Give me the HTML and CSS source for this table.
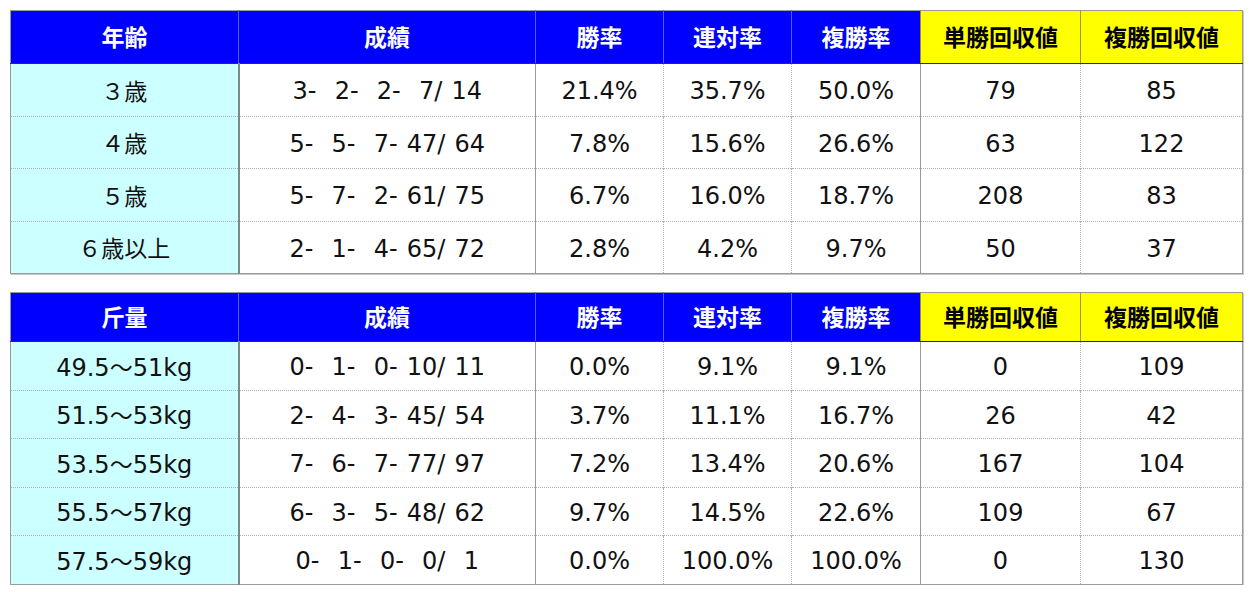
FILE: index.html
```html
<!DOCTYPE html>
<html lang="ja">
<head>
<meta charset="utf-8">
<link rel="stylesheet" href="styles.css">
</head>
<body>
<div class="page">
<table class="stats t1">
<colgroup><col class="c1"><col class="c2"><col class="c3"><col class="c4"><col class="c5"><col class="c6"><col class="c7"></colgroup>
<thead><tr><th>年齢</th><th>成績</th><th>勝率</th><th>連対率</th><th>複勝率</th><th class="y">単勝回収値</th><th class="y">複勝回収値</th></tr></thead>
<tbody>
<tr><td class="k"><span class="ja">３歳</span></td><td class="rec">3-  2-  2-  7/ 14</td><td>21.4%</td><td>35.7%</td><td>50.0%</td><td>79</td><td>85</td></tr>
<tr><td class="k"><span class="ja">４歳</span></td><td class="rec">5-  5-  7- 47/ 64</td><td>7.8%</td><td>15.6%</td><td>26.6%</td><td>63</td><td>122</td></tr>
<tr><td class="k"><span class="ja">５歳</span></td><td class="rec">5-  7-  2- 61/ 75</td><td>6.7%</td><td>16.0%</td><td>18.7%</td><td>208</td><td>83</td></tr>
<tr><td class="k"><span class="ja">６歳以上</span></td><td class="rec">2-  1-  4- 65/ 72</td><td>2.8%</td><td>4.2%</td><td>9.7%</td><td>50</td><td>37</td></tr>
</tbody>
</table>
<table class="stats t2">
<colgroup><col class="c1"><col class="c2"><col class="c3"><col class="c4"><col class="c5"><col class="c6"><col class="c7"></colgroup>
<thead><tr><th>斤量</th><th>成績</th><th>勝率</th><th>連対率</th><th>複勝率</th><th class="y">単勝回収値</th><th class="y">複勝回収値</th></tr></thead>
<tbody>
<tr><td class="k">49.5<span class="ja">～</span>51kg</td><td class="rec">0-  1-  0- 10/ 11</td><td>0.0%</td><td>9.1%</td><td>9.1%</td><td>0</td><td>109</td></tr>
<tr><td class="k">51.5<span class="ja">～</span>53kg</td><td class="rec">2-  4-  3- 45/ 54</td><td>3.7%</td><td>11.1%</td><td>16.7%</td><td>26</td><td>42</td></tr>
<tr><td class="k">53.5<span class="ja">～</span>55kg</td><td class="rec">7-  6-  7- 77/ 97</td><td>7.2%</td><td>13.4%</td><td>20.6%</td><td>167</td><td>104</td></tr>
<tr><td class="k">55.5<span class="ja">～</span>57kg</td><td class="rec">6-  3-  5- 48/ 62</td><td>9.7%</td><td>14.5%</td><td>22.6%</td><td>109</td><td>67</td></tr>
<tr><td class="k">57.5<span class="ja">～</span>59kg</td><td class="rec">0-  1-  0-  0/  1</td><td>0.0%</td><td>100.0%</td><td>100.0%</td><td>0</td><td>130</td></tr>
</tbody>
</table>
</div>
</body>
</html>
```
FILE: styles.css
```css
html, body {
  margin: 0;
  padding: 0;
  background: #ffffff;
}
.page {
  padding: 10px 10px 0 10px;
  display: flex;
  flex-direction: column;
  gap: 18px;
}
.stats {
  border-collapse: collapse;
  table-layout: fixed;
  width: 1232px;
  border: 1px solid #9a9a9a;
  box-shadow: 1px 1px 0 #c8c8c8;
  font-family: "DejaVu Sans", "Noto Sans CJK JP", sans-serif;
  color: #111;
}
.c1 { width: 228px; }
.c2 { width: 297px; }
.c3 { width: 128px; }
.c4 { width: 128px; }
.c5 { width: 129px; }
.c6 { width: 160px; }
.c7 { width: 162px; }
.stats th {
  background: #0000ff;
  color: #ffffff;
  font-family: "Noto Sans CJK JP", sans-serif;
  font-weight: 700;
  font-size: 23px;
  line-height: 1;
  text-align: center;
  padding: 0 0 2px 0;
  border-bottom: 1px solid #303030;
  border-left: 1px solid #5a5aff;
}
.stats th:first-child { border-left: none; }
.stats th.y {
  background: #ffff00;
  color: #000000;
  border-left: 1px solid #9c9c00;
}
.t1 thead tr { height: 53px; }
.t1 tbody tr { height: 52.5px; }
.t2 thead tr { height: 49px; }
.t2 tbody tr { height: 48.5px; }
.stats td {
  font-size: 24px;
  line-height: 1;
  text-align: center;
  padding: 3px 0 0 0;
  border-top: 1px dotted #b0b0b0;
  border-left: 1px dotted #b0b0b0;
  white-space: pre;
}
.stats td.rec {
  word-spacing: 1.5px;
  border-right: 1px solid #9a9a9a;
}
.ja {
  font-family: "Noto Sans CJK JP", sans-serif;
  font-size: 23px;
}
.stats tbody tr:first-child td { border-top: 1px solid #303030; }
.stats td.k {
  background: #ccffff;
  border-right: 2px solid #7a8a8a;
}
.stats td:nth-child(6) {
  border-left: 1px solid #9a9a9a;
}
```
